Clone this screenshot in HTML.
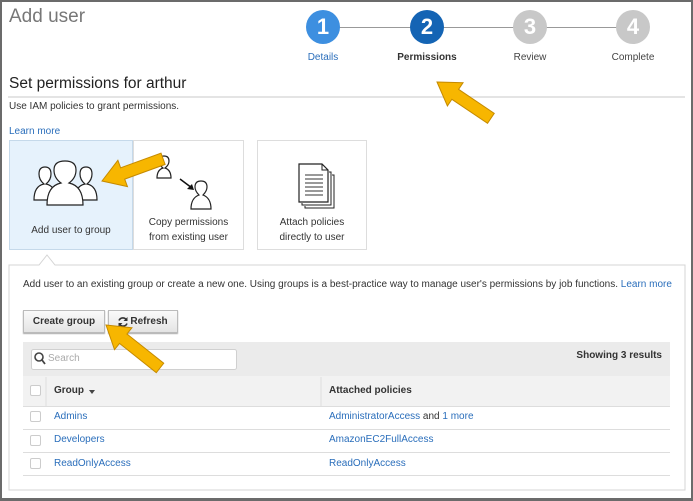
<!DOCTYPE html>
<html><head><meta charset="utf-8"><style>
*{margin:0;padding:0;box-sizing:border-box}
body{width:693px;height:501px;overflow:hidden;background:#fff;font-family:"Liberation Sans",Arial,sans-serif;position:relative;color:#333}
.frame{position:absolute;left:0;top:0;width:693px;height:501px;border:2px solid #6b6b6b;border-bottom-width:3px}
.a{position:absolute;white-space:nowrap}
.c{position:absolute;width:34px;height:34px;border-radius:50%;color:#fff;font-weight:bold;font-size:22px;text-align:center;line-height:34px}
.lbl{position:absolute;font-size:10px;text-align:center;width:100px}
.blue{color:#2a6ebb}
.card{position:absolute;top:140px;height:110px;border:1px solid #ddd;background:#fff;font-size:10px;text-align:center;line-height:15px}
.btn{position:absolute;top:310px;height:23px;border:1px solid #bbb;background:linear-gradient(#fafafa,#e4e4e4);font-size:10px;font-weight:bold;line-height:21px;text-align:center;box-shadow:0 1px 1px #aaa}
.cb{position:absolute;left:30px;width:11px;height:11px;border:1px solid #ccc;border-radius:2px;background:#fff}
.row{position:absolute;left:23px;width:647px;height:1px;background:#ddd}
.t{position:absolute;font-size:10px;white-space:nowrap}
</style></head><body>
<div class="a" style="left:9px;top:6px;font-size:19px;color:#777">Add user</div>
<div style="position:absolute;left:323px;top:27px;width:310px;height:1px;background:#999"></div>
<div class="c" style="left:306px;top:10px;background:#3d8fe0">1</div>
<div class="c" style="left:410px;top:10px;background:#1464b4">2</div>
<div class="c" style="left:513px;top:10px;background:#c8c8c8">3</div>
<div class="c" style="left:616px;top:10px;background:#c8c8c8">4</div>
<div class="lbl blue" style="left:273px;top:52px">Details</div>
<div class="lbl" style="left:377px;top:52px;font-weight:bold">Permissions</div>
<div class="lbl" style="left:480px;top:52px;color:#444">Review</div>
<div class="lbl" style="left:583px;top:52px;color:#444">Complete</div>
<div class="a" style="left:9px;top:75px;font-size:15.5px;color:#222">Set permissions for arthur</div>
<div style="position:absolute;left:8px;top:96px;width:677px;height:2px;background:#e4e4e4"></div>
<div class="a" style="left:9px;top:101px;font-size:10px">Use IAM policies to grant permissions.</div>
<div class="a blue" style="left:9px;top:126px;font-size:10px">Learn more</div>

<div class="card" style="left:9px;width:124px;background:#e6f2fc;border-color:#c5d9ea"><div style="position:absolute;top:82px;width:100%">Add user to group</div></div>
<div class="card" style="left:133px;width:111px"><div style="position:absolute;top:74px;width:100%">Copy permissions<br>from existing user</div></div>
<div class="card" style="left:257px;width:110px"><div style="position:absolute;top:74px;width:100%">Attach policies<br>directly to user</div></div>

<svg style="position:absolute;left:0;top:0" width="693" height="501">
<g fill="#fff" stroke="#222" stroke-width="1.2">
<path d="M34 200 Q34 186 44 184 Q39 180 39 174 Q39 167 45 167 Q51 167 51 174 Q51 180 46 184 Q56 186 56 200Z"/>
<path d="M75 200 Q75 186 85 184 Q80 180 80 174 Q80 167 86 167 Q92 167 92 174 Q92 180 87 184 Q97 186 97 200Z"/>
<path d="M47 205 Q47 186 61 183 Q54 178 54 170 Q54 161 65 161 Q76 161 76 170 Q76 178 69 183 Q83 186 83 205Z"/>
<path d="M157 178 Q157 170 163 168 Q159 165 159 161 Q159 156 164 156 Q169 156 169 161 Q169 165 165 168 Q171 170 171 178Z"/>
<path d="M191 209 Q191 198 199 195 Q195 191 195 187 Q195 181 201 181 Q207 181 207 187 Q207 191 203 195 Q211 198 211 209Z"/>
<path d="M299 164 L322 164 L328 170 L328 202 L299 202Z"/>
</g>
<path d="M180 179 L192 188" stroke="#111" stroke-width="1.5"/><path d="M194 190 L187 189 L192 184Z" fill="#111"/>
<g fill="none" stroke="#222" stroke-width="1"><path d="M329 172 L331 172 L331 205 L302 205 L302 203"/><path d="M332 175 L334 175 L334 208 L305 208 L305 206"/><path d="M322 164 L322 170 L328 170"/></g>
<g stroke="#333" stroke-width="1"><path d="M305 175h18M305 179h18M305 183h18M305 187h18M305 191h18M305 195h18"/></g>
<path d="M9 265 L39 265 L47 255 L55 265 L685 265 L685 490 L9 490Z" fill="#fff" stroke="#d4d4d4"/>
<rect x="23" y="342" width="647" height="64" fill="#ebebeb"/>
<rect x="23" y="376" width="647" height="30" fill="#f2f2f2"/>
<line x1="46" y1="377" x2="46" y2="406" stroke="#ddd"/>
<line x1="321" y1="377" x2="321" y2="406" stroke="#ddd"/>
<rect x="31.5" y="349.5" width="205" height="20" rx="2" fill="#fff" stroke="#d0d0d0"/>
<circle cx="39" cy="357" r="4" fill="none" stroke="#444" stroke-width="1.6"/><line x1="42" y1="360" x2="45" y2="364" stroke="#444" stroke-width="1.8"/>
<path d="M89 390 l6 0 l-3 4z" fill="#444"/>
</svg>

<div class="a" style="left:23px;top:279px;font-size:10px">Add user to an existing group or create a new one. Using groups is a best-practice way to manage user's permissions by job functions. <span class="blue">Learn more</span></div>
<div class="btn" style="left:23px;width:82px">Create group</div>
<div class="btn" style="left:108px;width:70px;padding-left:12px">Refresh
<svg style="position:absolute;left:8px;top:5px" width="12" height="12"><path d="M9.5 4 A4.2 4.2 0 0 0 2 4.5 M2.5 8 A4.2 4.2 0 0 0 10 7.5" fill="none" stroke="#333" stroke-width="1.6"/><path d="M10.5 1 L10.5 5 L6.5 5Z M1.5 11 L1.5 7 L5.5 7Z" fill="#333"/></svg></div>
<div class="a" style="left:48px;top:353px;font-size:10px;color:#aaa">Search</div>
<div class="a" style="right:31px;top:350px;font-size:10px;font-weight:bold">Showing 3 results</div>
<div class="cb" style="top:385px"></div>
<div class="t" style="left:54px;top:385px;font-weight:bold">Group</div>
<div class="t" style="left:329px;top:385px;font-weight:bold">Attached policies</div>
<div class="row" style="top:406px"></div>
<div class="cb" style="top:411px"></div><div class="t blue" style="left:54px;top:411px">Admins</div><div class="t" style="left:329px;top:411px"><span class="blue">AdministratorAccess</span> and <span class="blue">1 more</span></div>
<div class="row" style="top:429px"></div>
<div class="cb" style="top:435px"></div><div class="t blue" style="left:54px;top:434px">Developers</div><div class="t blue" style="left:329px;top:434px">AmazonEC2FullAccess</div>
<div class="row" style="top:452px"></div>
<div class="cb" style="top:458px"></div><div class="t blue" style="left:54px;top:458px">ReadOnlyAccess</div><div class="t blue" style="left:329px;top:458px">ReadOnlyAccess</div>
<div class="row" style="top:475px"></div>

<svg style="position:absolute;left:0;top:0" width="693" height="501">
<g fill="#f7b600" stroke="#c58a00" stroke-width="1">
<polygon transform="translate(437,82) rotate(34)" points="0,0 22,-14 22,-6 65,-6 65,6 22,6 22,14"/>
<polygon transform="translate(102,181) rotate(-20)" points="0,0 22,-14 22,-6 65,-6 65,6 22,6 22,14"/>
<polygon transform="translate(106,325) rotate(38.5)" points="0,0 22,-14 22,-6 69,-6 69,6 22,6 22,14"/>
</g></svg>
<div class="frame"></div>
</body></html>
